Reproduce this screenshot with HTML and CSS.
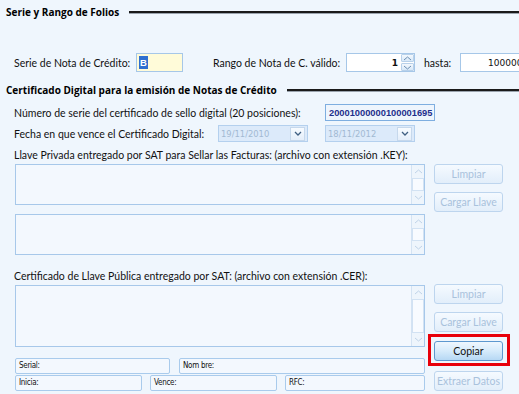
FILE: index.html
```html
<!DOCTYPE html>
<html lang="es">
<head>
	<meta charset="UTF-8">
	<title>Notas de Crédito</title>
	<link rel="stylesheet" href="styles.css">
</head>
<body>
<div class="form">
	<div class="group-title">
		<span class="group-title__text">Serie y Rango de Folios</span>
		<span class="group-title__rule"></span>
	</div>

	<div class="folio-row">
		<span class="lbl folio-row__serie-lbl">Serie de Nota de Crédito:</span>
		<span class="field field--serie"><span class="field__sel">B</span></span>
		<span class="lbl folio-row__rango-lbl">Rango de Nota de C. válido:</span>
		<span class="field field--num field--spin">
			<span class="field__val">1</span>
			<span class="spin">
				<span class="spin__btn"><svg width="9" height="5" viewBox="0 0 9 5"><path d="M1 4 L4.5 1 L8 4" fill="none" stroke="#6d8fb3" stroke-width="1"/></svg></span>
				<span class="spin__btn"><svg width="9" height="5" viewBox="0 0 9 5"><path d="M1 1 L4.5 4 L8 1" fill="none" stroke="#6d8fb3" stroke-width="1"/></svg></span>
			</span>
		</span>
		<span class="lbl folio-row__hasta-lbl">hasta:</span>
		<span class="field field--num field--hasta"><span class="field__val">100000</span></span>
	</div>

	<div class="group-title group-title--cert">
		<span class="group-title__text">Certificado Digital para la emisión de Notas de Crédito</span>
		<span class="group-title__rule"></span>
	</div>

	<div class="cert-row">
		<span class="lbl cert-row__num-lbl">Número de serie del certificado de sello digital (20 posiciones):</span>
		<span class="field field--serial-no">20001000000100001695</span>
	</div>

	<div class="cert-row cert-row--dates">
		<span class="lbl cert-row__date-lbl">Fecha en que vence el Certificado Digital:</span>
		<span class="combo">
			<span class="combo__val">19/11/2010</span>
			<span class="combo__btn"><svg width="8" height="5" viewBox="0 0 8 5"><path d="M1 1 L4 4 L7 1" fill="none" stroke="#3f5f82" stroke-width="1.3"/></svg></span>
		</span>
		<span class="combo combo--second">
			<span class="combo__val">18/11/2012</span>
			<span class="combo__btn"><svg width="8" height="5" viewBox="0 0 8 5"><path d="M1 1 L4 4 L7 1" fill="none" stroke="#3f5f82" stroke-width="1.3"/></svg></span>
		</span>
	</div>

	<p class="lbl section-lbl">Llave Privada entregado por SAT para Sellar las Facturas: (archivo con extensión .KEY):</p>

	<div class="file-block">
		<div class="file-block__main">
			<div class="memo">
				<div class="memo__body"></div>
				<div class="scroll">
					<span class="scroll__arrow"><svg width="9" height="5" viewBox="0 0 9 5"><path d="M1 4 L4.5 1 L8 4" fill="none" stroke="#bfd3e8"/></svg></span>
					<span class="scroll__thumb"></span>
					<span class="scroll__arrow"><svg width="9" height="5" viewBox="0 0 9 5"><path d="M1 1 L4.5 4 L8 1" fill="none" stroke="#bfd3e8"/></svg></span>
				</div>
			</div>
			<div class="memo memo--second">
				<div class="memo__body"></div>
				<div class="scroll">
					<span class="scroll__arrow"><svg width="9" height="5" viewBox="0 0 9 5"><path d="M1 4 L4.5 1 L8 4" fill="none" stroke="#bfd3e8"/></svg></span>
					<span class="scroll__thumb"></span>
					<span class="scroll__arrow"><svg width="9" height="5" viewBox="0 0 9 5"><path d="M1 1 L4.5 4 L8 1" fill="none" stroke="#bfd3e8"/></svg></span>
				</div>
			</div>
		</div>
		<div class="file-block__actions">
			<button class="btn" disabled>Limpiar</button>
			<button class="btn" disabled>Cargar Llave</button>
		</div>
	</div>

	<p class="lbl section-lbl section-lbl--cer">Certificado de Llave Pública entregado por SAT: (archivo con extensión .CER):</p>

	<div class="file-block file-block--cer">
		<div class="file-block__main">
			<div class="memo memo--tall">
				<div class="memo__body"></div>
				<div class="scroll">
					<span class="scroll__arrow"><svg width="9" height="5" viewBox="0 0 9 5"><path d="M1 4 L4.5 1 L8 4" fill="none" stroke="#bfd3e8"/></svg></span>
					<span class="scroll__thumb"></span>
					<span class="scroll__arrow"><svg width="9" height="5" viewBox="0 0 9 5"><path d="M1 1 L4.5 4 L8 1" fill="none" stroke="#bfd3e8"/></svg></span>
				</div>
			</div>
			<div class="info-row">
				<span class="info info--serial">Serial:</span>
				<span class="info info--nombre">Nom bre:</span>
			</div>
			<div class="info-row info-row--second">
				<span class="info info--inicia">Inicia:</span>
				<span class="info info--vence">Vence:</span>
				<span class="info info--rfc">RFC:</span>
			</div>
		</div>
		<div class="file-block__actions">
			<button class="btn" disabled>Limpiar</button>
			<button class="btn" disabled>Cargar Llave</button>
			<div class="highlight">
				<button class="btn btn--active">Copiar</button>
			</div>
			<button class="btn" disabled>Extraer Datos</button>
		</div>
	</div>
</div>
</body>
</html>
```

FILE: styles.css
```css
body {
    margin: 0;
    width: 519px;
    height: 394px;
    overflow: hidden;
    background-color: #eff6fd;
    font-family: Lato, "Open Sans", sans-serif;
    font-size: 10.5px;
    color: #111;
}

.form {
    padding: 5px 0 0 6px;
    white-space: nowrap;
}

.lbl {
    display: block;
    line-height: 14px;
    margin: 0;
}

/* group headers */
.group-title {
    display: flex;
    align-items: center;
    height: 14px;
}

.group-title__text {
    font-family: "Open Sans", sans-serif;
    font-weight: bold;
    font-size: 10px;
    color: #000;
}

.group-title__rule {
    flex: 1;
    height: 2px;
    margin-left: 10px;
    background-color: #1a1a1a;
    border-bottom: 1px solid #9aa3ad;
}

.group-title--cert {
    margin-top: 11px;
}

/* folios row */
.folio-row {
    display: flex;
    align-items: center;
    margin-top: 34px;
    height: 19px;
}

.folio-row > * {
    flex-shrink: 0;
}

.folio-row__serie-lbl {
    width: 122px;
    padding-left: 8px;
}

.folio-row__rango-lbl {
    width: 133px;
    margin-left: 30px;
}

.folio-row__hasta-lbl {
    width: 36px;
    margin-left: 9px;
}

.field {
    display: flex;
    align-items: center;
    box-sizing: border-box;
    height: 19px;
    border: 1px solid #a6c7e8;
    background-color: #fff;
}

.field--serie {
    width: 47px;
    background-color: #fffbd9;
    padding-left: 2px;
}

.field__sel {
    background-color: #2f6fd0;
    color: #fff;
    font-family: "Liberation Sans", sans-serif;
    font-weight: bold;
    font-size: 9.5px;
    line-height: 13px;
    padding: 0 1px;
}

.field--num {
    justify-content: flex-end;
    font-family: "DejaVu Sans", sans-serif;
    font-size: 9px;
    color: #111;
}

.field--spin {
    width: 69px;
    font-weight: bold;
}

.field--spin .field__val {
    margin-right: 3px;
}

.field--hasta {
    width: 80px;
    justify-content: flex-start;
    padding-left: 27px;
}

.spin {
    display: flex;
    flex-direction: column;
    gap: 1px;
    width: 13px;
    height: 17px;
}

.spin__btn {
    flex: 1;
    display: flex;
    align-items: center;
    justify-content: center;
    background: linear-gradient(#f3f8fd, #d7e8f8);
    border: 1px solid #b8d1ea;
    border-radius: 1px;
}

/* certificate rows */
.cert-row {
    display: flex;
    align-items: center;
    height: 17px;
    margin-top: 7px;
}

.cert-row > * {
    flex-shrink: 0;
}

.cert-row--dates {
    margin-top: 4px;
}

.cert-row__num-lbl {
    width: 311px;
    padding-left: 8px;
}

.cert-row__date-lbl {
    width: 204px;
    padding-left: 8px;
}

.field--serial-no {
    width: 110px;
    height: 17px;
    padding-left: 3px;
    background-color: #eef5fd;
    border-color: #7eaee0;
    font-family: "Liberation Sans", sans-serif;
    font-weight: bold;
    font-size: 9.3px;
    color: #1f2f8c;
}

.combo {
    display: flex;
    align-items: center;
    box-sizing: border-box;
    width: 90px;
    height: 17px;
    padding: 0 2px 0 2px;
    border: 1px solid #b4d0ee;
    background-color: #dceafa;
}

.combo--second {
    margin-left: 17px;
}

.combo__val {
    flex: 1;
    font-family: "DejaVu Sans", sans-serif;
    font-size: 8.4px;
    color: #a2b9d2;
}

.combo__btn {
    display: flex;
    align-items: center;
    justify-content: center;
    width: 13px;
    height: 12px;
    border: 1px solid #c6d8ec;
    background: linear-gradient(#f7fbff, #e4eefa);
}

/* key & cer blocks */
.section-lbl {
    padding-left: 8px;
    margin-top: 6px;
}

.section-lbl--cer {
    margin-top: 14px;
}

.file-block {
    display: flex;
    gap: 9px;
    margin-top: 2px;
    padding-left: 9px;
}

.file-block--cer {
    margin-top: 1px;
}

.file-block__main {
    width: 410px;
}

.file-block--cer .file-block__main {
    padding-top: 1px;
}

.file-block__actions {
    display: flex;
    flex-direction: column;
    gap: 8px;
    width: 69px;
}

.memo {
    display: flex;
    box-sizing: border-box;
    height: 41px;
    border: 1px solid #a7c8ea;
    background-color: #f3f8fe;
}

.memo--second {
    margin-top: 9px;
}

.memo--tall {
    height: 62px;
}

.memo__body {
    flex: 1;
}

.scroll {
    display: flex;
    flex-direction: column;
    width: 12px;
    border-left: 1px solid #d4e3f3;
}

.scroll__arrow {
    display: flex;
    align-items: center;
    justify-content: center;
    height: 13px;
    background-color: #eef5fc;
}

.scroll__thumb {
    flex: 1;
    border: 1px solid #d2e2f3;
    background-color: #f8fbff;
}

.btn {
    box-sizing: border-box;
    width: 69px;
    height: 20px;
    padding: 0;
    border: 1px solid #bdd5ee;
    border-radius: 3px;
    background: linear-gradient(#f5faff, #e2eefa);
    font-family: Lato, "Open Sans", sans-serif;
    font-size: 10.5px;
    color: #a9c2dc;
}

.highlight {
    display: flex;
    box-sizing: border-box;
    width: 82px;
    height: 32px;
    margin: -6px 0 -3px -6px;
    padding: 4px 0 0 3px;
    border: 3px solid #e8000b;
}

.btn--active {
    border-color: #5d98cf;
    background: linear-gradient(#eff7fe 0%, #d6ebfb 50%, #b6d8f4 100%);
    color: #111;
}

/* certificate info */
.info-row {
    display: flex;
    gap: 9px;
    margin-top: 11px;
}

.info-row--second {
    gap: 8px;
    margin-top: 1px;
}

.info {
    box-sizing: border-box;
    height: 16px;
    line-height: 14px;
    padding-left: 3px;
    border: 1px solid #a9cbec;
    border-radius: 2px;
    background-color: #f3f8fe;
    font-family: "DejaVu Sans Condensed", sans-serif;
    font-size: 8px;
    letter-spacing: -0.3px;
    color: #111;
}

.info--serial {
    width: 155px;
}

.info--nombre {
    width: 246px;
}

.info--inicia,
.info--vence {
    width: 127px;
}

.info--rfc {
    width: 140px;
}
```
